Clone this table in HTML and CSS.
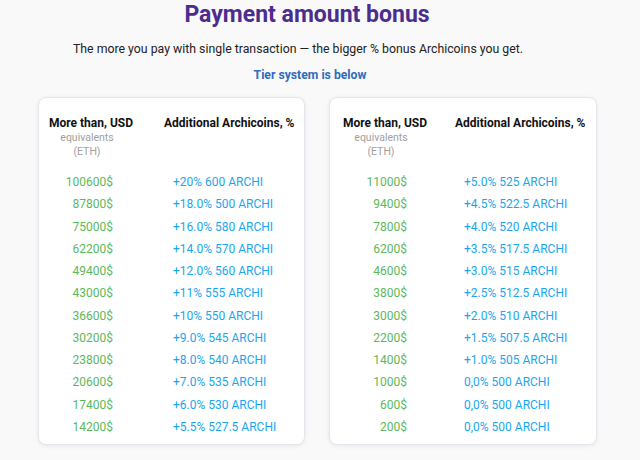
FILE: index.html
```html
<!DOCTYPE html>
<html lang="en">
<head>
<meta charset="utf-8">
<title>Payment amount bonus</title>
<link rel="stylesheet" href="styles.css">
</head>
<body>
<div class="page">
  <h1 class="title">Payment amount bonus</h1>
  <p class="lead">The more you pay with single transaction — the bigger % bonus Archicoins you get.</p>
  <p class="tier">Tier system is below</p>
  <div class="cards">
    <div class="card card-left">
      <div class="head head-usd"><span class="head-main">More than, USD</span><span class="head-sub">equivalents<br>(ETH)</span></div>
      <div class="head head-bonus">Additional Archicoins, %</div>
      <div class="usd">100600$</div><div class="bonus">+20% 600 ARCHI</div>
      <div class="usd">87800$</div><div class="bonus">+18.0% 500 ARCHI</div>
      <div class="usd">75000$</div><div class="bonus">+16.0% 580 ARCHI</div>
      <div class="usd">62200$</div><div class="bonus">+14.0% 570 ARCHI</div>
      <div class="usd">49400$</div><div class="bonus">+12.0% 560 ARCHI</div>
      <div class="usd">43000$</div><div class="bonus">+11% 555 ARCHI</div>
      <div class="usd">36600$</div><div class="bonus">+10% 550 ARCHI</div>
      <div class="usd">30200$</div><div class="bonus">+9.0% 545 ARCHI</div>
      <div class="usd">23800$</div><div class="bonus">+8.0% 540 ARCHI</div>
      <div class="usd">20600$</div><div class="bonus">+7.0% 535 ARCHI</div>
      <div class="usd">17400$</div><div class="bonus">+6.0% 530 ARCHI</div>
      <div class="usd">14200$</div><div class="bonus">+5.5% 527.5 ARCHI</div>
    </div>
    <div class="card card-right">
      <div class="head head-usd"><span class="head-main">More than, USD</span><span class="head-sub">equivalents<br>(ETH)</span></div>
      <div class="head head-bonus">Additional Archicoins, %</div>
      <div class="usd">11000$</div><div class="bonus">+5.0% 525 ARCHI</div>
      <div class="usd">9400$</div><div class="bonus">+4.5% 522.5 ARCHI</div>
      <div class="usd">7800$</div><div class="bonus">+4.0% 520 ARCHI</div>
      <div class="usd">6200$</div><div class="bonus">+3.5% 517.5 ARCHI</div>
      <div class="usd">4600$</div><div class="bonus">+3.0% 515 ARCHI</div>
      <div class="usd">3800$</div><div class="bonus">+2.5% 512.5 ARCHI</div>
      <div class="usd">3000$</div><div class="bonus">+2.0% 510 ARCHI</div>
      <div class="usd">2200$</div><div class="bonus">+1.5% 507.5 ARCHI</div>
      <div class="usd">1400$</div><div class="bonus">+1.0% 505 ARCHI</div>
      <div class="usd">1000$</div><div class="bonus">0,0% 500 ARCHI</div>
      <div class="usd">600$</div><div class="bonus">0,0% 500 ARCHI</div>
      <div class="usd">200$</div><div class="bonus">0,0% 500 ARCHI</div>
    </div>
  </div>
</div>
</body>
</html>
```
FILE: styles.css
```css
html, body {
  margin: 0;
  padding: 0;
  background: #f9f9f9;
}
body {
  font-family: Roboto, "Liberation Sans", Arial, sans-serif;
  color: #222;
}
.page {
  width: 640px;
  height: 460px;
  overflow: hidden;
}
.title {
  margin: 1px 0 0 0;
  width: 614px;
  text-align: center;
  font-size: 23px;
  line-height: 28px;
  font-weight: 700;
  color: #4a2d8e;
}
.lead {
  margin: 10px 0 0 73px;
  font-size: 12.3px;
  line-height: 20px;
  color: #222;
  white-space: nowrap;
}
.tier {
  margin: 8px 0 0 0;
  width: 620px;
  text-align: center;
  font-size: 12.2px;
  line-height: 16px;
  font-weight: 700;
  color: #2f6cbd;
}
.cards {
  display: flex;
  gap: 24px;
  margin: 14px 0 0 38px;
}
.card {
  box-sizing: border-box;
  width: 267px;
  height: 348px;
  background: #fff;
  border: 1px solid #e3e7ed;
  border-radius: 8px;
  box-shadow: 0 1px 4px rgba(0, 0, 0, 0.08);
  padding: 17px 8px 0 10px;
  display: grid;
  grid-template-columns: 84px 1fr;
  column-gap: 31px;
  grid-auto-rows: 22.27px;
  grid-template-rows: 56px;
  align-content: start;
}
.card-right {
  width: 268px;
  padding-left: 13px;
  column-gap: 28px;
}
.head {
  font-size: 12px;
  line-height: 16px;
  font-weight: 700;
  color: #111;
  white-space: nowrap;
}
.head-usd {
  text-align: center;
  display: flex;
  flex-direction: column;
}
.head-sub {
  font-weight: 400;
  font-size: 10.5px;
  line-height: 14px;
  color: #a0a0a0;
  padding-right: 8px;
}
.usd, .bonus {
  font-size: 12px;
  line-height: 22.27px;
  white-space: nowrap;
}
.usd {
  text-align: right;
  padding-right: 20px;
  color: #5cb85c;
}
.bonus {
  padding-left: 9px;
  color: #1aa6ee;
}
```
